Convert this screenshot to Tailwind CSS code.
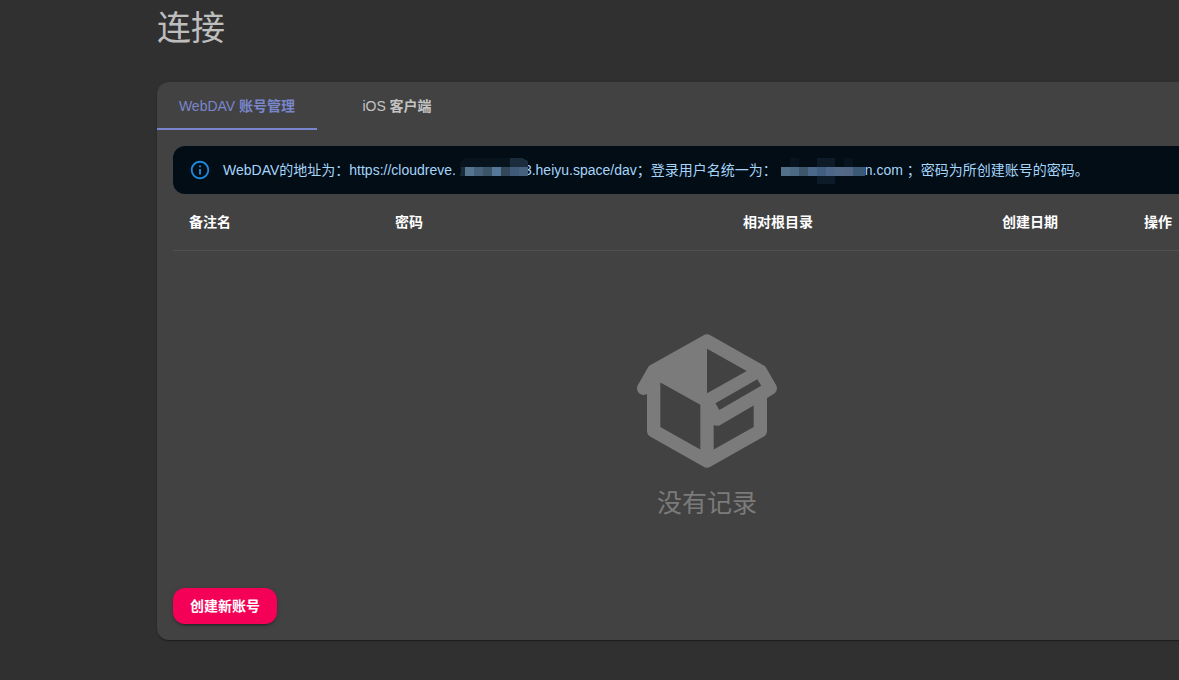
<!DOCTYPE html>
<html lang="zh-CN">
  <head>
    <meta charset="UTF-8" />
    <meta name="viewport" content="width=device-width, initial-scale=1.0" />
    <title>连接</title>
    <script src="https://cdn.jsdelivr.net/npm/@tailwindcss/browser@4"></script>
  </head>
  <body
    class="min-h-screen overflow-x-hidden bg-[#303030] font-['Liberation_Sans','Noto_Sans_CJK_SC',sans-serif] text-sm text-white"
  >
    <main class="ml-[157px] min-w-[1100px] pt-1.5 pb-10">
      <h1 class="mb-8 text-[34px] leading-11 text-white/70">连接</h1>

      <section
        class="rounded-xl bg-[#424242] shadow-[0_2px_1px_-1px_rgba(0,0,0,0.2),0_1px_1px_rgba(0,0,0,0.14),0_1px_3px_rgba(0,0,0,0.12)]"
      >
        <!-- Tabs -->
        <div role="tablist" class="flex h-12">
          <button
            type="button"
            role="tab"
            aria-selected="true"
            class="min-w-40 border-b-2 border-[#7986cb] pt-0.5 text-[#7986cb]"
          >
            WebDAV <span class="font-bold">账号管理</span>
          </button>
          <button
            type="button"
            role="tab"
            aria-selected="false"
            class="min-w-40 text-white/70"
          >
            iOS <span class="font-bold">客户端</span>
          </button>
        </div>

        <div class="p-4">
          <!-- Server address -->
          <div
            role="alert"
            class="flex h-12 items-center gap-3 rounded-xl bg-[#020d16] px-4 text-[#a6d5fa]"
          >
            <svg class="size-[22px] text-[#2196f3] opacity-90" viewBox="0 0 24 24" fill="currentColor">
              <path
                d="M11,7h2v2h-2V7z M11,11h2v6h-2V11z M12,2C6.48,2,2,6.48,2,12s4.48,10,10,10s10-4.48,10-10S17.52,2,12,2z M12,20c-4.41,0-8-3.59-8-8s3.59-8,8-8s8,3.59,8,8S16.41,20,12,20z"
              />
            </svg>
            <p class="flex h-5 items-center leading-5 whitespace-pre">
              <span>WebDAV的地址为：https://cloudreve.</span>
              <svg class="relative -mr-1 ml-1 h-7 w-[68px] shrink-0" viewBox="0 0 68 28" shape-rendering="crispEdges">
                <path fill="#07131d" d="M0 6 5 2H50V20H0z" />
                <path fill="#1b2c3d" d="M50 2H62L68 5V11H50z" />
                <path fill="#182b38" d="M0 18H2V20H0zM1 11H5V20H1z" />
                <path fill="#57758f" d="M5 11h9v9H5z" />
                <path fill="#45617b" d="M14 11h9v9h-9z" />
                <path fill="#3b5468" d="M23 11h9v9h-9z" />
                <path fill="#54779a" d="M32 11h9v9h-9z" />
                <path fill="#33475a" d="M41 11h9v9h-9z" />
                <path fill="#3e5a78" d="M50 11h9v9h-9z" />
                <path fill="#47607c" d="M59 11h9v9h-9z" />
              </svg>
              <span>3.heiyu.space/dav；登录用户名统一为：</span>
              <svg class="ml-1 h-7 w-[84px] shrink-0" viewBox="0 0 84 28" shape-rendering="crispEdges">
                <path fill="#07131e" d="M9 2h9v9H9zM63 2h9v9h-9z" />
                <path fill="#0d1b28" d="M36 2h18v9H36zM36 20h18v8H36z" />
                <path fill="#527089" d="M0 11h9v9H0z" />
                <path fill="#4b6a86" d="M9 11h9v9H9z" />
                <path fill="#3d5669" d="M18 11h9v9h-9z" />
                <path fill="#49688a" d="M27 11h9v9h-9z" />
                <path fill="#405f80" d="M36 11h9v9h-9z" />
                <path fill="#4e6789" d="M45 11h9v9h-9z" />
                <path fill="#526988" d="M54 11h9v9h-9z" />
                <path fill="#526685" d="M63 11h9v9h-9z" />
                <path fill="#3b5877" d="M72 11h12v9H72z" />
              </svg>
              <span>n.com ；密码为所创建账号的密码。</span>
            </p>
          </div>

          <!-- Accounts -->
          <table class="w-full table-fixed text-left leading-6">
            <colgroup>
              <col class="w-[206px]" />
              <col class="w-[348px]" />
              <col class="w-[259px]" />
              <col class="w-[142px]" />
              <col />
            </colgroup>
            <thead>
              <tr class="border-b border-[#515151]">
                <th scope="col" class="p-4 font-bold">备注名</th>
                <th scope="col" class="p-4 font-bold">密码</th>
                <th scope="col" class="p-4 font-bold">相对根目录</th>
                <th scope="col" class="p-4 font-bold">创建日期</th>
                <th scope="col" class="p-4 font-bold">操作</th>
              </tr>
            </thead>
          </table>

          <!-- Empty state -->
          <div class="flex flex-col items-center pt-[70px] pb-[63px] text-[#7b7b7b]">
            <svg class="size-40" viewBox="0 0 24 24" fill="currentColor">
              <path
                d="M2,10.96C1.5,10.68 1.35,10.07 1.63,9.59L3.13,7C3.24,6.8 3.41,6.66 3.6,6.58L11.43,2.18C11.59,2.06 11.79,2 12,2C12.21,2 12.41,2.06 12.57,2.18L20.47,6.62C20.66,6.72 20.82,6.88 20.91,7.08L22.36,9.6C22.64,10.08 22.47,10.69 22,10.96L21,11.54V16.5C21,16.88 20.79,17.21 20.47,17.38L12.57,21.82C12.41,21.94 12.21,22 12,22C11.79,22 11.59,21.94 11.43,21.82L3.53,17.38C3.21,17.21 3,16.88 3,16.5V10.96C2.7,11.13 2.32,11.14 2,10.96M12,4.15V4.15L12,10.85V10.85L17.96,7.5L12,4.15M5,15.91L11,19.29V12.58L5,9.21V15.91M19,15.91V12.69L14,15.59C13.67,15.77 13.3,15.76 13,15.6V19.29L19,15.91M13.85,13.36L20.13,9.73L19.55,8.72L13.27,12.35L13.85,13.36Z"
              />
            </svg>
            <p class="text-[25px] leading-11">没有记录</p>
          </div>

          <button
            type="button"
            class="h-9 rounded-xl bg-[#f50057] px-[17px] font-bold shadow-[0_3px_1px_-2px_rgba(0,0,0,0.2),0_2px_2px_rgba(0,0,0,0.14),0_1px_5px_rgba(0,0,0,0.12)] hover:bg-[#ab003c]"
          >
            创建新账号
          </button>
        </div>
      </section>
    </main>
  </body>
</html>
